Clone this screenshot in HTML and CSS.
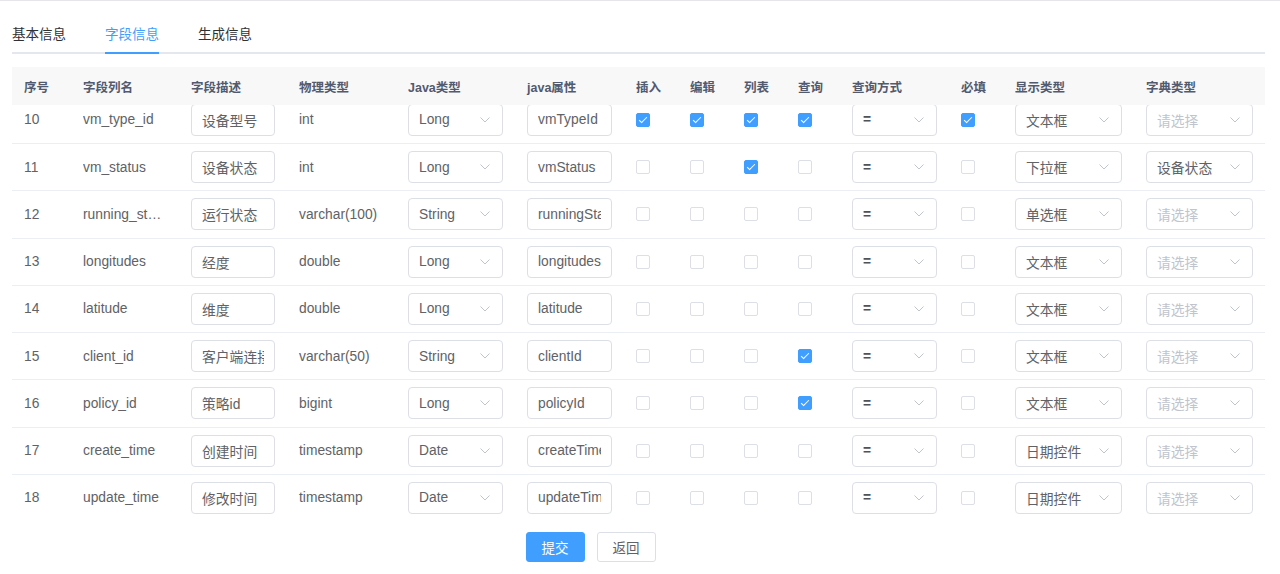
FILE: index.html
```html
<!DOCTYPE html>
<html lang="zh-CN">
<head>
  <meta charset="UTF-8" />
  <title>修改生成配置</title>
  <meta name="viewport" content="width=device-width, initial-scale=1.0" />
  <link rel="stylesheet" href="styles.css">
</head>
<body>
  <div class="page">
    <div class="tab-nav">
      <span class="tab">基本信息</span>
      <span class="tab active">字段信息</span>
      <span class="tab">生成信息</span>
    </div>

    <div class="table">
      <div class="row thead">
        <div class="cell">序号</div>
        <div class="cell">字段列名</div>
        <div class="cell">字段描述</div>
        <div class="cell">物理类型</div>
        <div class="cell">Java类型</div>
        <div class="cell">java属性</div>
        <div class="cell">插入</div>
        <div class="cell">编辑</div>
        <div class="cell">列表</div>
        <div class="cell">查询</div>
        <div class="cell">查询方式</div>
        <div class="cell">必填</div>
        <div class="cell">显示类型</div>
        <div class="cell">字典类型</div>
      </div>

      <div class="tbody">
        <div class="rows">
          <div class="row">
            <div class="cell">10</div>
            <div class="cell"><span class="ellipsis">vm_type_id</span></div>
            <div class="cell"><input class="ipt" value="设备型号"></div>
            <div class="cell">int</div>
            <div class="cell"><div class="sel"><span>Long</span><svg class="arrow" viewBox="0 0 10 6"><path d="M0.5 0.5L5 5L9.5 0.5"/></svg></div></div>
            <div class="cell"><input class="ipt" value="vmTypeId"></div>
            <div class="cell"><span class="chk on"></span></div>
            <div class="cell"><span class="chk on"></span></div>
            <div class="cell"><span class="chk on"></span></div>
            <div class="cell"><span class="chk on"></span></div>
            <div class="cell"><div class="sel"><span class="eq">=</span><svg class="arrow" viewBox="0 0 10 6"><path d="M0.5 0.5L5 5L9.5 0.5"/></svg></div></div>
            <div class="cell"><span class="chk on"></span></div>
            <div class="cell"><div class="sel"><span>文本框</span><svg class="arrow" viewBox="0 0 10 6"><path d="M0.5 0.5L5 5L9.5 0.5"/></svg></div></div>
            <div class="cell"><div class="sel"><span class="ph">请选择</span><svg class="arrow" viewBox="0 0 10 6"><path d="M0.5 0.5L5 5L9.5 0.5"/></svg></div></div>
          </div>

          <div class="row">
            <div class="cell">11</div>
            <div class="cell"><span class="ellipsis">vm_status</span></div>
            <div class="cell"><input class="ipt" value="设备状态"></div>
            <div class="cell">int</div>
            <div class="cell"><div class="sel"><span>Long</span><svg class="arrow" viewBox="0 0 10 6"><path d="M0.5 0.5L5 5L9.5 0.5"/></svg></div></div>
            <div class="cell"><input class="ipt" value="vmStatus"></div>
            <div class="cell"><span class="chk"></span></div>
            <div class="cell"><span class="chk"></span></div>
            <div class="cell"><span class="chk on"></span></div>
            <div class="cell"><span class="chk"></span></div>
            <div class="cell"><div class="sel"><span class="eq">=</span><svg class="arrow" viewBox="0 0 10 6"><path d="M0.5 0.5L5 5L9.5 0.5"/></svg></div></div>
            <div class="cell"><span class="chk"></span></div>
            <div class="cell"><div class="sel"><span>下拉框</span><svg class="arrow" viewBox="0 0 10 6"><path d="M0.5 0.5L5 5L9.5 0.5"/></svg></div></div>
            <div class="cell"><div class="sel"><span>设备状态</span><svg class="arrow" viewBox="0 0 10 6"><path d="M0.5 0.5L5 5L9.5 0.5"/></svg></div></div>
          </div>

          <div class="row">
            <div class="cell">12</div>
            <div class="cell"><span class="ellipsis">running_status</span></div>
            <div class="cell"><input class="ipt" value="运行状态"></div>
            <div class="cell">varchar(100)</div>
            <div class="cell"><div class="sel"><span>String</span><svg class="arrow" viewBox="0 0 10 6"><path d="M0.5 0.5L5 5L9.5 0.5"/></svg></div></div>
            <div class="cell"><input class="ipt" value="runningStatus"></div>
            <div class="cell"><span class="chk"></span></div>
            <div class="cell"><span class="chk"></span></div>
            <div class="cell"><span class="chk"></span></div>
            <div class="cell"><span class="chk"></span></div>
            <div class="cell"><div class="sel"><span class="eq">=</span><svg class="arrow" viewBox="0 0 10 6"><path d="M0.5 0.5L5 5L9.5 0.5"/></svg></div></div>
            <div class="cell"><span class="chk"></span></div>
            <div class="cell"><div class="sel"><span>单选框</span><svg class="arrow" viewBox="0 0 10 6"><path d="M0.5 0.5L5 5L9.5 0.5"/></svg></div></div>
            <div class="cell"><div class="sel"><span class="ph">请选择</span><svg class="arrow" viewBox="0 0 10 6"><path d="M0.5 0.5L5 5L9.5 0.5"/></svg></div></div>
          </div>

          <div class="row">
            <div class="cell">13</div>
            <div class="cell"><span class="ellipsis">longitudes</span></div>
            <div class="cell"><input class="ipt" value="经度"></div>
            <div class="cell">double</div>
            <div class="cell"><div class="sel"><span>Long</span><svg class="arrow" viewBox="0 0 10 6"><path d="M0.5 0.5L5 5L9.5 0.5"/></svg></div></div>
            <div class="cell"><input class="ipt" value="longitudes"></div>
            <div class="cell"><span class="chk"></span></div>
            <div class="cell"><span class="chk"></span></div>
            <div class="cell"><span class="chk"></span></div>
            <div class="cell"><span class="chk"></span></div>
            <div class="cell"><div class="sel"><span class="eq">=</span><svg class="arrow" viewBox="0 0 10 6"><path d="M0.5 0.5L5 5L9.5 0.5"/></svg></div></div>
            <div class="cell"><span class="chk"></span></div>
            <div class="cell"><div class="sel"><span>文本框</span><svg class="arrow" viewBox="0 0 10 6"><path d="M0.5 0.5L5 5L9.5 0.5"/></svg></div></div>
            <div class="cell"><div class="sel"><span class="ph">请选择</span><svg class="arrow" viewBox="0 0 10 6"><path d="M0.5 0.5L5 5L9.5 0.5"/></svg></div></div>
          </div>

          <div class="row">
            <div class="cell">14</div>
            <div class="cell"><span class="ellipsis">latitude</span></div>
            <div class="cell"><input class="ipt" value="维度"></div>
            <div class="cell">double</div>
            <div class="cell"><div class="sel"><span>Long</span><svg class="arrow" viewBox="0 0 10 6"><path d="M0.5 0.5L5 5L9.5 0.5"/></svg></div></div>
            <div class="cell"><input class="ipt" value="latitude"></div>
            <div class="cell"><span class="chk"></span></div>
            <div class="cell"><span class="chk"></span></div>
            <div class="cell"><span class="chk"></span></div>
            <div class="cell"><span class="chk"></span></div>
            <div class="cell"><div class="sel"><span class="eq">=</span><svg class="arrow" viewBox="0 0 10 6"><path d="M0.5 0.5L5 5L9.5 0.5"/></svg></div></div>
            <div class="cell"><span class="chk"></span></div>
            <div class="cell"><div class="sel"><span>文本框</span><svg class="arrow" viewBox="0 0 10 6"><path d="M0.5 0.5L5 5L9.5 0.5"/></svg></div></div>
            <div class="cell"><div class="sel"><span class="ph">请选择</span><svg class="arrow" viewBox="0 0 10 6"><path d="M0.5 0.5L5 5L9.5 0.5"/></svg></div></div>
          </div>

          <div class="row">
            <div class="cell">15</div>
            <div class="cell"><span class="ellipsis">client_id</span></div>
            <div class="cell"><input class="ipt" value="客户端连接id"></div>
            <div class="cell">varchar(50)</div>
            <div class="cell"><div class="sel"><span>String</span><svg class="arrow" viewBox="0 0 10 6"><path d="M0.5 0.5L5 5L9.5 0.5"/></svg></div></div>
            <div class="cell"><input class="ipt" value="clientId"></div>
            <div class="cell"><span class="chk"></span></div>
            <div class="cell"><span class="chk"></span></div>
            <div class="cell"><span class="chk"></span></div>
            <div class="cell"><span class="chk on"></span></div>
            <div class="cell"><div class="sel"><span class="eq">=</span><svg class="arrow" viewBox="0 0 10 6"><path d="M0.5 0.5L5 5L9.5 0.5"/></svg></div></div>
            <div class="cell"><span class="chk"></span></div>
            <div class="cell"><div class="sel"><span>文本框</span><svg class="arrow" viewBox="0 0 10 6"><path d="M0.5 0.5L5 5L9.5 0.5"/></svg></div></div>
            <div class="cell"><div class="sel"><span class="ph">请选择</span><svg class="arrow" viewBox="0 0 10 6"><path d="M0.5 0.5L5 5L9.5 0.5"/></svg></div></div>
          </div>

          <div class="row">
            <div class="cell">16</div>
            <div class="cell"><span class="ellipsis">policy_id</span></div>
            <div class="cell"><input class="ipt" value="策略id"></div>
            <div class="cell">bigint</div>
            <div class="cell"><div class="sel"><span>Long</span><svg class="arrow" viewBox="0 0 10 6"><path d="M0.5 0.5L5 5L9.5 0.5"/></svg></div></div>
            <div class="cell"><input class="ipt" value="policyId"></div>
            <div class="cell"><span class="chk"></span></div>
            <div class="cell"><span class="chk"></span></div>
            <div class="cell"><span class="chk"></span></div>
            <div class="cell"><span class="chk on"></span></div>
            <div class="cell"><div class="sel"><span class="eq">=</span><svg class="arrow" viewBox="0 0 10 6"><path d="M0.5 0.5L5 5L9.5 0.5"/></svg></div></div>
            <div class="cell"><span class="chk"></span></div>
            <div class="cell"><div class="sel"><span>文本框</span><svg class="arrow" viewBox="0 0 10 6"><path d="M0.5 0.5L5 5L9.5 0.5"/></svg></div></div>
            <div class="cell"><div class="sel"><span class="ph">请选择</span><svg class="arrow" viewBox="0 0 10 6"><path d="M0.5 0.5L5 5L9.5 0.5"/></svg></div></div>
          </div>

          <div class="row">
            <div class="cell">17</div>
            <div class="cell"><span class="ellipsis">create_time</span></div>
            <div class="cell"><input class="ipt" value="创建时间"></div>
            <div class="cell">timestamp</div>
            <div class="cell"><div class="sel"><span>Date</span><svg class="arrow" viewBox="0 0 10 6"><path d="M0.5 0.5L5 5L9.5 0.5"/></svg></div></div>
            <div class="cell"><input class="ipt" value="createTime"></div>
            <div class="cell"><span class="chk"></span></div>
            <div class="cell"><span class="chk"></span></div>
            <div class="cell"><span class="chk"></span></div>
            <div class="cell"><span class="chk"></span></div>
            <div class="cell"><div class="sel"><span class="eq">=</span><svg class="arrow" viewBox="0 0 10 6"><path d="M0.5 0.5L5 5L9.5 0.5"/></svg></div></div>
            <div class="cell"><span class="chk"></span></div>
            <div class="cell"><div class="sel"><span>日期控件</span><svg class="arrow" viewBox="0 0 10 6"><path d="M0.5 0.5L5 5L9.5 0.5"/></svg></div></div>
            <div class="cell"><div class="sel"><span class="ph">请选择</span><svg class="arrow" viewBox="0 0 10 6"><path d="M0.5 0.5L5 5L9.5 0.5"/></svg></div></div>
          </div>

          <div class="row">
            <div class="cell">18</div>
            <div class="cell"><span class="ellipsis">update_time</span></div>
            <div class="cell"><input class="ipt" value="修改时间"></div>
            <div class="cell">timestamp</div>
            <div class="cell"><div class="sel"><span>Date</span><svg class="arrow" viewBox="0 0 10 6"><path d="M0.5 0.5L5 5L9.5 0.5"/></svg></div></div>
            <div class="cell"><input class="ipt" value="updateTime"></div>
            <div class="cell"><span class="chk"></span></div>
            <div class="cell"><span class="chk"></span></div>
            <div class="cell"><span class="chk"></span></div>
            <div class="cell"><span class="chk"></span></div>
            <div class="cell"><div class="sel"><span class="eq">=</span><svg class="arrow" viewBox="0 0 10 6"><path d="M0.5 0.5L5 5L9.5 0.5"/></svg></div></div>
            <div class="cell"><span class="chk"></span></div>
            <div class="cell"><div class="sel"><span>日期控件</span><svg class="arrow" viewBox="0 0 10 6"><path d="M0.5 0.5L5 5L9.5 0.5"/></svg></div></div>
            <div class="cell"><div class="sel"><span class="ph">请选择</span><svg class="arrow" viewBox="0 0 10 6"><path d="M0.5 0.5L5 5L9.5 0.5"/></svg></div></div>
          </div>
        </div>
      </div>
    </div>

    <div class="actions">
      <button class="btn btn-primary">提交</button>
      <button class="btn">返回</button>
    </div>
  </div>
</body>
</html>
```

FILE: styles.css
```css
html, body {
  margin: 0;
  padding: 0;
  background: #fff;
  font-family: 'Liberation Sans', 'Noto Sans CJK SC', sans-serif;
  color: #606266;
  overflow: hidden;
}

.page {
  border-top: 1px solid #e6e6ea;
  padding: 15px 15px 0 12px;
}

/* onglets */
.tab-nav {
  display: flex;
  gap: 39px;
  border-bottom: 2px solid #e4e7ed;
}

.tab {
  height: 36px;
  line-height: 38px;
  font-size: 13.5px;
  color: #303133;
  margin-bottom: -2px;
  border-bottom: 2px solid transparent;
}

.tab.active {
  color: #409eff;
  border-bottom-color: #409eff;
}

/* tableau */
.table {
  margin-top: 13px;
  font-size: 13.8px;
}

.row {
  display: grid;
  grid-template-columns: 59px 108px 108px 109px 119px 109px 54px 54px 54px 54px 109px 54px 131px 131px;
  height: 47.25px;
  box-sizing: border-box;
  border-bottom: 1px solid #ebeef5;
}

.thead {
  height: 38px;
  background: #f8f8f9;
  border-bottom: none;
  color: #515a6e;
  font-weight: bold;
  font-size: 12.5px;
  padding-top: 1px;
}

.cell {
  display: flex;
  align-items: center;
  padding: 0 12px;
  min-width: 0;
  white-space: nowrap;
}

.ellipsis {
  overflow: hidden;
  text-overflow: ellipsis;
}

.tbody {
  height: 416px;
  overflow: hidden;
}

.rows {
  margin-top: -8.25px;
}

.ipt, .sel {
  width: 100%;
  height: 32px;
  box-sizing: border-box;
  border: 1px solid #dcdfe6;
  border-radius: 4px;
  background: #fff;
  font-family: inherit;
  font-size: 13.8px;
  color: #606266;
}

.ipt {
  padding: 0 10px;
  outline: none;
}

.sel {
  display: flex;
  align-items: center;
  padding: 0 12px 0 10px;
}

.sel .ph {
  color: #c0c4cc;
}

.sel .eq {
  color: #505256;
  font-weight: bold;
}

.arrow {
  margin-left: auto;
  width: 10px;
  height: 6px;
  flex-shrink: 0;
  fill: none;
  stroke: #c0c4cc;
  stroke-width: 1;
}

.chk {
  position: relative;
  width: 14px;
  height: 14px;
  box-sizing: border-box;
  border: 1px solid #dcdfe6;
  border-radius: 2px;
  background: #fff;
}

.chk.on {
  background: #409eff;
  border-color: #409eff;
}

.chk.on::after {
  content: "";
  position: absolute;
  left: 4px;
  top: 1px;
  width: 3px;
  height: 7px;
  border: 1px solid #fff;
  border-left: 0;
  border-top: 0;
  transform: rotate(45deg);
}

/* boutons */
.actions {
  display: flex;
  justify-content: center;
  gap: 12px;
  margin-top: 11px;
  padding-right: 96px;
}

.btn {
  height: 30px;
  padding: 0 15px;
  border: 1px solid #dcdfe6;
  border-radius: 3px;
  background: #fff;
  color: #606266;
  font-family: inherit;
  font-size: 13.5px;
}

.btn-primary {
  background: #409eff;
  border-color: #409eff;
  color: #fff;
}
```
